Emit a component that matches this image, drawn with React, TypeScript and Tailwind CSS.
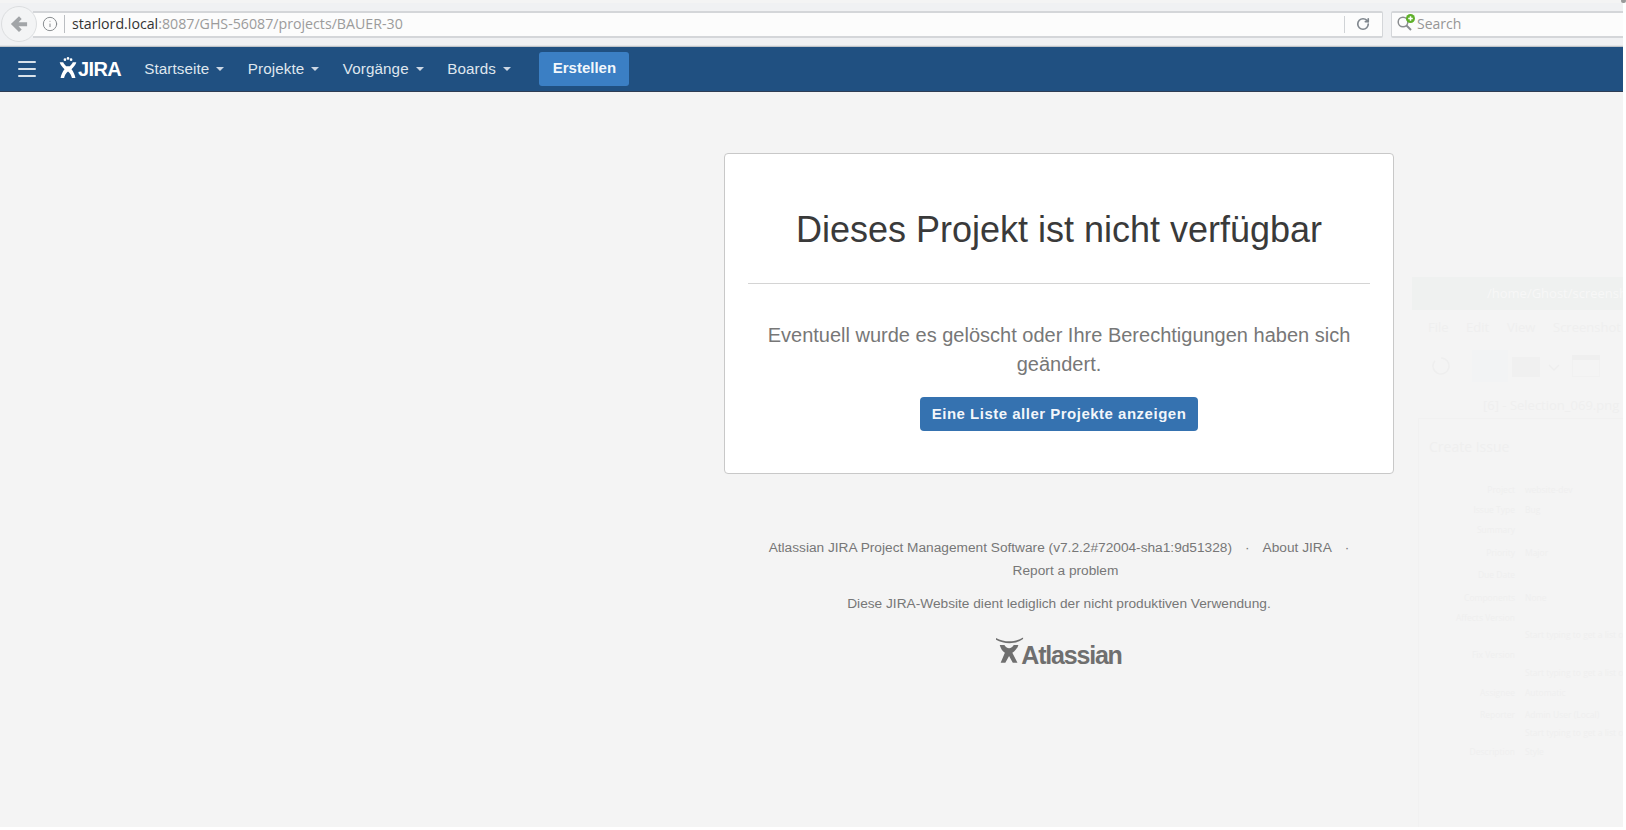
import { Info, RotateCw, Menu } from "lucide-react";

const navItems = ["Startseite", "Projekte", "Vorgänge", "Boards"];

function JiraMark({ className }: { className?: string }) {
  return (
    <svg viewBox="0 0 20 24" className={className} fill="currentColor">
      <circle cx="6.500" cy="3" r="1.500" />
      <circle cx="10" cy="1.600" r="1.500" />
      <circle cx="13.500" cy="3" r="1.500" />
      <path d="M.5 6h4c.8 1.800 2.500 3.500 3.500 4.500h4C13 9.500 14.700 7.800 15.500 6h4c-.5 2.500-3 5.500-5.500 8 2 2.500 3.800 6 4.500 10h-4c-.6-3-2.300-5.800-4.500-7.500C7.800 18.200 6.100 21 5.500 24h-4c.7-4 2.500-7.500 4.500-10C3.500 11.500 1 8.500.5 6z" />
    </svg>
  );
}

function AtlassianMark({ className }: { className?: string }) {
  return (
    <svg viewBox="0 0 30 28" className={className} fill="currentColor">
      <path d="M0 .5C9 5.500 21 5.500 29 0v1.800C21 7.500 9 7.500 0 2.500z" />
      <path d="M4 8h5c1 2 3 3.500 5 3.500s4-1.500 5-3.500h5c-1 3.500-3.500 6.500-6.500 8.500L23 27h-5l-4-7-4 7H5l4.500-10.500C6.500 14.500 5 11.500 4 8z" />
    </svg>
  );
}

function Caret() {
  return <span className="ml-[7px] mt-[1px] inline-block border-x-[4px] border-t-[4px] border-x-transparent border-t-current opacity-90" />;
}

function BrowserBar() {
  return (
    <div className="relative h-[47px] border-b border-[#bfc4c9] pt-[3px] font-['Open_Sans',sans-serif]">
      <div className="h-full bg-[#f0f1f3] border-b border-[#e4e6e8] flex items-center">
        <div className="relative z-10 ml-[1px] w-[36px] h-[36px] rounded-full bg-[#f3f4f5] border border-[#dcdee0] flex items-center justify-center shrink-0">
          <svg viewBox="0 0 20 20" className="w-[18px] h-[18px]" fill="#a2a5a8">
            <path d="M10 1.500l3 3-3.500 3.500H19v4.500H9.500L13 16l-3 3L1 10z" />
          </svg>
        </div>
        <div className="-ml-[4px] w-[1350px] h-[27px] bg-[#fcfcfc] border-y-2 border-r border-[#d4d6d9] rounded-r-[2px] flex items-center shrink-0">
          <Info className="ml-[9px] w-[16px] h-[16px] text-[#808488]" strokeWidth={1.4} />
          <div className="ml-[6px] w-px h-[18px] bg-[#bbbec2]" />
          <span className="ml-[7px] text-[14.200px] leading-none text-[#9b9b9b]">
            <span className="text-[#333333]">starlord.local</span>:8087/GHS-56087/projects/BAUER-30
          </span>
          <div className="ml-auto w-px h-[17px] bg-[#d0d3d6]" />
          <RotateCw className="ml-[11px] mr-[12px] w-[14px] h-[14px] text-[#7f868d]" strokeWidth={2.8} />
        </div>
        <div className="ml-[8px] flex-1 h-[27px] bg-[#fcfcfc] border-y-2 border-l border-[#d4d6d9] rounded-l-[2px] flex items-center">
          <svg viewBox="0 0 20 18" className="ml-[4px] w-[20px] h-[18px] shrink-0 -mt-[3px]" fill="none">
            <circle cx="7" cy="8" r="4.800" stroke="#8a8d90" strokeWidth="1.500" />
            <path d="M10.500 11.500l4.500 4.500" stroke="#8a8d90" strokeWidth="2" />
            <circle cx="14.500" cy="4.500" r="4.500" fill="#5fb02a" />
            <path d="M14.500 2.200v4.600M12.200 4.500h4.600" stroke="#fff" strokeWidth="1.500" />
          </svg>
          <span className="ml-[1px] text-[14px] leading-none text-[#969696]">Search</span>
        </div>
      </div>
      <div className="absolute -right-[3px] -top-[1px] w-[5px] h-[4px] rounded-full bg-[#9a9a9a]" />
    </div>
  );
}

function NavBar() {
  return (
    <div className="h-[45px] bg-[#205081] border-b border-[#2e3d54] flex items-center text-white font-['Liberation_Sans',sans-serif]">
      <Menu className="ml-[15px] w-[24px] h-[24px] text-[#d9e2ea]" strokeWidth={2} />
      <div className="ml-[20px] flex items-center">
        <JiraMark className="w-[18px] h-[21px] -mt-[3px]" />
        <span className="ml-[1px] text-[20px] font-bold leading-none tracking-[-0.6px]">JIRA</span>
      </div>
      <div className="ml-[11px] flex items-center">
        {navItems.map((item) => (
          <div key={item} className="flex items-center pl-[12px] pr-[11.500px] text-[15.200px] text-[#dfe6ee] tracking-[0.1px]">
            {item}
            <Caret />
          </div>
        ))}
      </div>
      <button className="ml-[17px] -mt-[1px] h-[34px] w-[90px] rounded-[3px] bg-[#3b7fc4] text-[15px] font-bold text-white/95">
        Erstellen
      </button>
    </div>
  );
}

function Ghost() {
  const rows = [
    { y: 490, label: "Project", value: "website-dev" },
    { y: 510, label: "Issue Type", value: "Bug" },
    { y: 530, label: "Summary", value: "" },
    { y: 553, label: "Priority", value: "Major" },
    { y: 575, label: "Due Date", value: "" },
    { y: 598, label: "Components", value: "None" },
    { y: 618, label: "Affects Version", value: "" },
    { y: 635, label: "", value: "Start typing to get a list of possible" },
    { y: 655, label: "Fix Version", value: "" },
    { y: 673, label: "", value: "Start typing to get a list of possible" },
    { y: 693, label: "Assignee", value: "Automatic" },
    { y: 715, label: "Reporter", value: "Admin User (Local)" },
    { y: 733, label: "", value: "Start typing to get a list of possible" },
    { y: 752, label: "Description", value: "Style" },
  ];
  return (
    <div className="absolute left-[1412px] top-[277px] right-0 bottom-0 overflow-hidden text-[#efefef] font-['Open_Sans',sans-serif] pointer-events-none whitespace-nowrap">
      <div className="h-[33px] bg-[#eff1f0] flex items-center pl-[75px] text-[13px] text-[#f7f7f7]">/home/Ghost/screenshots</div>
      <div className="absolute left-[16px] top-[41px] text-[13px] leading-[18px]">File</div>
      <div className="absolute left-[54px] top-[41px] text-[13px] leading-[18px]">Edit</div>
      <div className="absolute left-[95px] top-[41px] text-[13px] leading-[18px]">View</div>
      <div className="absolute left-[141px] top-[41px] text-[13px] leading-[18px]">Screenshot</div>
      <svg viewBox="0 0 18 18" className="absolute left-[20px] top-[80px] w-[18px] h-[18px]" fill="none" stroke="#eeeeee" strokeWidth="1.500">
        <path d="M9 1a8 8 0 1 1-6 2.700" />
      </svg>
      <div className="absolute left-[60px] top-[73px] w-[36px] h-[32px] bg-[#f2f3f4]" />
      <div className="absolute left-[100px] top-[80px] w-[28px] h-[20px] bg-[#f0f0f0]" />
      <svg viewBox="0 0 12 8" className="absolute left-[136px] top-[87px] w-[12px] h-[8px]" fill="none" stroke="#eeeeee" strokeWidth="1.500">
        <path d="M1 1l5 5 5-5" />
      </svg>
      <div className="absolute left-[160px] top-[78px] w-[28px] h-[5px] bg-[#efefef]" />
      <div className="absolute left-[160px] top-[83px] w-[28px] h-[17px] border-x border-b border-[#f1f1f1]" />
      <div className="absolute left-[71px] top-[119px] text-[13px] leading-[18px]">[6] - Selection_069.png</div>
      <div className="absolute left-[6px] top-[141px] right-0 bottom-0 border-l border-t border-[#f1f1f1]" />
      <div className="absolute left-[17px] top-[160px] text-[14px] leading-[20px]">Create Issue</div>
      {rows.map((r) => (
        <div key={r.y} className="absolute left-0 top-0 w-full text-[8.500px] leading-[10px]" style={{ transform: `translateY(${r.y - 282}px)` }}>
          <span className="absolute right-[108px]">{r.label}</span>
          {r.value && <span className="absolute left-[113px]">{r.value}</span>}
        </div>
      ))}
    </div>
  );
}

export default function App() {
  return (
    <div className="h-[830px] w-[1626px] overflow-hidden bg-white font-['Liberation_Sans',sans-serif]">
      <div className="relative h-[827px] w-[1623px] bg-[#f4f4f4]">
        <BrowserBar />
        <NavBar />
        <Ghost />
        <main className="relative ml-[724px] w-[670px] pt-[61px]">
          <div className="h-[321px] bg-white border border-[#c8c8c8] rounded-[4px] px-[23px] text-center">
            <h1 className="pt-[53px] pb-[30px] border-b border-[#d4d4d4] text-[36px] leading-[46px] text-[#3a3a3a]">
              Dieses Projekt ist nicht verfügbar
            </h1>
            <p className="mt-[37px] text-[20px] leading-[29px] text-[#777777]">
              Eventuell wurde es gelöscht oder Ihre Berechtigungen haben sich geändert.
            </p>
            <button className="mt-[18px] h-[34px] px-[12px] rounded-[4px] bg-[#3572b0] text-[15px] font-bold tracking-[0.5px] text-white/95">
              Eine Liste aller Projekte anzeigen
            </button>
          </div>
          <footer className="mt-[62px] text-center text-[13.700px] text-[#777777]">
            <p className="pl-[13px] leading-[23px]">
              Atlassian JIRA Project Management Software (v7.2.2#72004-sha1:9d51328)
              <span className="mx-[13px]">·</span>About JIRA<span className="mx-[13px]">·</span>
              <br />
              Report a problem
            </p>
            <p className="mt-[10px] leading-[23px]">Diese JIRA-Website dient lediglich der nicht produktiven Verwendung.</p>
            <div className="mt-[22px] flex items-start justify-center text-[#6f6f6f]">
              <AtlassianMark className="w-[28px] h-[27px]" />
              <span className="-ml-[3px] mt-[6px] text-[25px] font-bold leading-none tracking-[-1.200px]">Atlassian</span>
            </div>
          </footer>
        </main>
      </div>
    </div>
  );
}
